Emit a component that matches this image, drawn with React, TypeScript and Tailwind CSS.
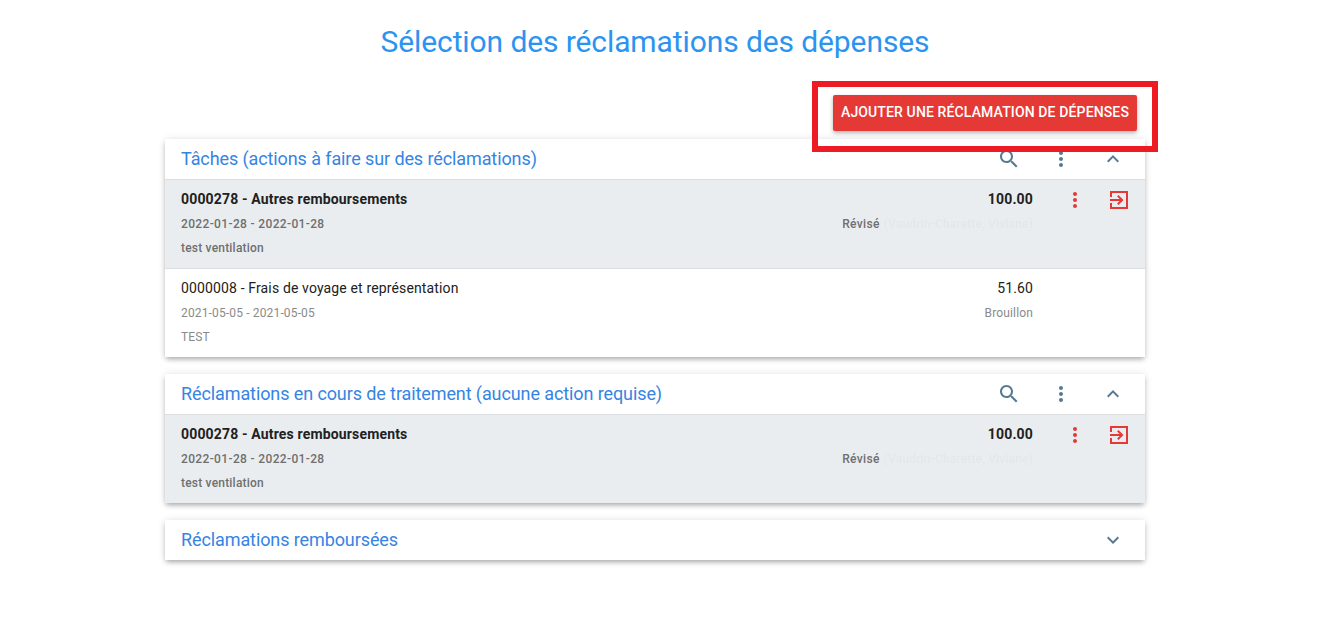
const searchPath =
  'M15.5 14h-.79l-.28-.27C15.41 12.59 16 11.11 16 9.5 16 5.91 13.09 3 9.5 3S3 5.91 3 9.5 5.91 16 9.5 16c1.61 0 3.09-.59 4.23-1.57l.27.28v.79l5 4.99L20.49 19l-4.99-5zm-6 0C7.01 14 5 11.99 5 9.5S7.01 5 9.5 5 14 7.01 14 9.5 11.99 14 9.5 14z'
const dotsPath =
  'M12 8c1.1 0 2-.9 2-2s-.9-2-2-2-2 .9-2 2 .9 2 2 2zm0 2c-1.1 0-2 .9-2 2s.9 2 2 2 2-.9 2-2-.9-2-2-2zm0 6c-1.1 0-2 .9-2 2s.9 2 2 2 2-.9 2-2-.9-2-2-2z'
const lessPath = 'M12 8l-6 6 1.41 1.41L12 10.83l4.59 4.58L18 14z'
const morePath = 'M16.59 8.59L12 13.17 7.41 8.59 6 10l6 6 6-6z'
const exitPath =
  'M10.09 15.59L11.5 17l5-5-5-5-1.41 1.41L12.67 11H3v2h9.67l-2.58 2.59zM19 3H3v6h2V5h14v14H5v-4H3v6h18V3z'

function Icon({ d, className }: { d: string; className: string }) {
  return (
    <svg viewBox="0 0 24 24" fill="currentColor" className={`shrink-0 ${className}`}>
      <path d={d} />
    </svg>
  )
}

function CardHeader({ title, open, tools = true }: { title: string; open: boolean; tools?: boolean }) {
  return (
    <div className="flex h-10 items-center pl-4 pr-5 text-[#557a92]">
      <h2 className="flex-1 text-[18px] leading-10 tracking-[-0.1px] text-[#3584e4]">{title}</h2>
      {tools && (
        <>
          <Icon d={searchPath} className="mr-[28px] h-6 w-6" />
          <Icon d={dotsPath} className="mr-[28px] h-6 w-6" />
        </>
      )}
      <Icon d={open ? lessPath : morePath} className="h-6 w-6" />
    </div>
  )
}

function ClaimRow({
  title,
  dates,
  note,
  amount,
  status,
  faint,
  active,
}: {
  title: string
  dates: string
  note: string
  amount: string
  status: string
  faint?: string
  active?: boolean
}) {
  const main = active ? 'font-bold tracking-[0.16px]' : 'tracking-[0.14px]'
  const sub = active ? 'tracking-[0.35px] text-[#6f6f6f]' : 'tracking-[0.15px] text-[#8a8a8a]'

  return (
    <div
      className={`flex h-[89px] border-t border-[#dcdfe1] pl-4 pr-3 ${active ? 'bg-[#eaedf0] font-medium' : 'bg-white'}`}
    >
      <div className="flex-1">
        <div className={`mt-[9px] text-[14px] leading-5 text-[#212121] ${main}`}>{title}</div>
        <div className={`mt-[5px] text-[12px] leading-5 ${sub}`}>{dates}</div>
        <div className={`mt-1 text-[12px] leading-5 ${active ? 'tracking-[0.2px] text-[#6f6f6f]' : sub}`}>{note}</div>
      </div>
      <div className="w-[200px] text-right">
        <div className={`mt-[9px] text-[14px] leading-5 text-[#212121] ${main}`}>{amount}</div>
        <div className={`mt-[5px] flex justify-end whitespace-nowrap text-[12px] leading-5 ${sub}`}>
          {status}
          {faint && <span className="ml-1 tracking-[0.16px] text-[#e4e7ea] blur-[0.6px]">{faint}</span>}
        </div>
      </div>
      <div className="flex w-[100px] shrink-0 items-start">
        {active && (
          <>
            <Icon d={dotsPath} className="ml-[30px] mt-[8px] h-6 w-6 text-[#e53935]" />
            <Icon d={exitPath} className="ml-[20px] mt-[8px] h-6 w-6 text-[#e53935]" />
          </>
        )}
      </div>
    </div>
  )
}

function Card({ children, className = '' }: { children: React.ReactNode; className?: string }) {
  return (
    <section className={`bg-white shadow-[0_3px_5px_-1px_rgba(0,0,0,0.3),0_0_8px_rgba(0,0,0,0.1)] ${className}`}>
      {children}
    </section>
  )
}

const revised = {
  title: '0000278 - Autres remboursements',
  dates: '2022-01-28 - 2022-01-28',
  note: 'test ventilation',
  amount: '100.00',
  status: 'Révisé',
  faint: '(Vaudrin-Charette, Viviane)',
  active: true,
}

export default function App() {
  return (
    <div className="relative h-[623px] w-[1310px] overflow-hidden bg-white font-['Roboto',sans-serif]">
      <h1 className="pt-[23px] text-center text-[30px] leading-[38px] tracking-[-0.1px] text-[#2b94f0]">
        Sélection des réclamations des dépenses
      </h1>

      <div className="mx-auto w-[980px]">
        <div className="mt-[34px] flex justify-end pr-2">
          <button className="h-9 rounded-[2px] bg-[#e53935] px-2 pb-px text-[14px] font-medium tracking-[0.13px] text-white shadow-[0_2px_4px_rgba(0,0,0,0.3)]">
            AJOUTER UNE RÉCLAMATION DE DÉPENSES
          </button>
        </div>

        <Card className="mt-2">
          <CardHeader title="Tâches (actions à faire sur des réclamations)" open />
          <ClaimRow {...revised} />
          <ClaimRow
            title="0000008 - Frais de voyage et représentation"
            dates="2021-05-05 - 2021-05-05"
            note="TEST"
            amount="51.60"
            status="Brouillon"
          />
        </Card>

        <Card className="mt-[17px]">
          <CardHeader title="Réclamations en cours de traitement (aucune action requise)" open />
          <ClaimRow {...revised} />
        </Card>

        <Card className="mt-[17px]">
          <CardHeader title="Réclamations remboursées" open={false} tools={false} />
        </Card>
      </div>

      {/* annotation drawn over the page */}
      <div className="absolute left-[812px] top-[81px] h-[71px] w-[346px] border-[6px] border-[#ed1c24]" />
    </div>
  )
}
